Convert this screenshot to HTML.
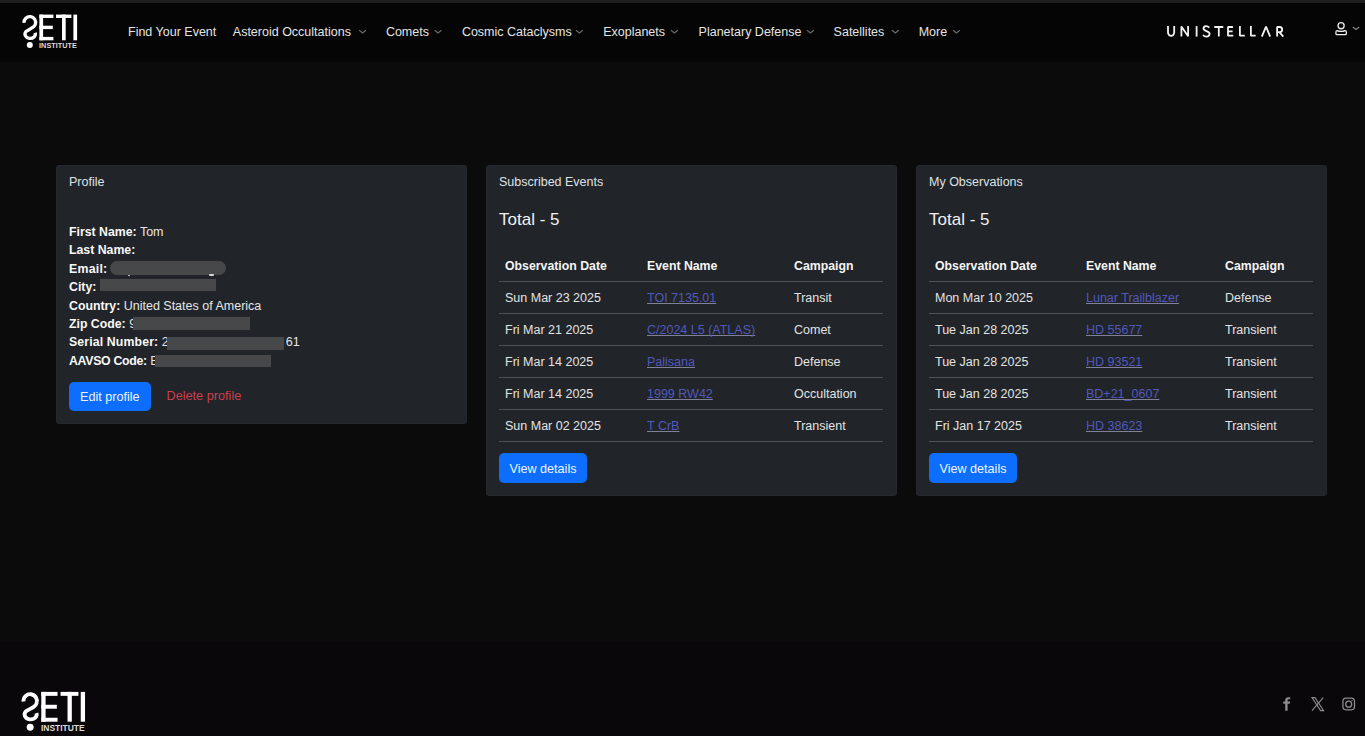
<!DOCTYPE html>
<html><head><meta charset="utf-8">
<style>
*{margin:0;padding:0;box-sizing:border-box}
html,body{width:1365px;height:736px;overflow:hidden;background:#0b0b0b;font-family:"Liberation Sans",sans-serif;color:#dee2e6}
.abs{position:absolute;white-space:nowrap}
#topstrip{position:absolute;left:0;top:0;width:1365px;height:3px;background:#1e1e1e}
#header{position:absolute;left:0;top:3px;width:1365px;height:59px;background:#050505}
#footer{position:absolute;left:0;top:642px;width:1365px;height:94px;background:#090709}
.nav{position:absolute;top:24px;font-size:12.5px;line-height:16px;color:#e4e4e4}
.chev{position:absolute;top:30px}
.card{position:absolute;top:165px;width:411px;background:#212529;border-radius:4px;box-shadow:inset 0 0 0 1px #25282c}
.ctitle{position:absolute;left:13px;top:9px;font-size:12.5px;line-height:16px;color:#dee2e6}
.total{position:absolute;left:13px;top:45px;font-size:17px;line-height:20px;color:#f0f0f0}
.tbl{position:absolute;left:13px;top:88px;width:384px}
.hdr{position:absolute;top:5px;font-size:12.3px;font-weight:bold;line-height:16px;color:#f5f5f5}
.row{position:absolute;left:0;width:384px;height:32px;border-top:1px solid #505356}
.cell{position:absolute;top:8px;font-size:12.5px;line-height:16px;color:#e3e3e3}
.lnk{color:#5258bb;text-decoration:underline;text-decoration-color:#7f8198;text-decoration-skip-ink:none;text-decoration-thickness:1px}
.btn{position:absolute;background:#0d6efd;border-radius:5px;color:#eef4ff;font-size:12.6px;line-height:16px}
.pf{position:absolute;left:13px;font-size:12.5px;line-height:16px;color:#e6e6e6}
.pf b{font-size:12.3px;color:#f8f8f8}
.red{position:absolute;background:#46484a}
</style></head><body>
<div id="topstrip"></div>
<div id="header"></div>
<div id="footer"></div>

<!-- header logo -->
<svg class="abs" style="left:0;top:0" width="100" height="60" viewBox="0 0 100 60">
  <g fill="none" stroke="#fff" stroke-width="3.3">
    <path d="M24.05,22.9 A5.8,5.8 0 1 1 35.3,24.3 C34.9,27.4 28.5,29.6 25.94,31.5 A5.2,4.35 0 1 0 35.22,32.87"/>
  </g>
  <circle cx="29.8" cy="45.1" r="3" fill="#fff"/>
  <g fill="#fff">
    <rect x="39.4" y="14.6" width="3.7" height="25.7"/>
    <rect x="39.4" y="14.6" width="14" height="3.4"/>
    <rect x="39.4" y="25.7" width="13.4" height="3.4"/>
    <rect x="39.4" y="36.9" width="14" height="3.4"/>
    <rect x="56" y="14.6" width="15.4" height="3.4"/>
    <rect x="62" y="14.6" width="3.7" height="25.7"/>
    <rect x="73.4" y="14.6" width="3.7" height="25.7"/>
  </g>
  <text x="39.1" y="48.2" font-family="Liberation Sans" font-weight="bold" font-size="8" fill="#dcdcdc" textLength="37.7" lengthAdjust="spacingAndGlyphs">INSTITUTE</text>
</svg>

<div class="nav" style="left:128px">Find Your Event</div>
<div class="nav" style="left:232.8px">Asteroid Occultations</div>
<div class="nav" style="left:385.9px">Comets</div>
<div class="nav" style="left:461.9px">Cosmic Cataclysms</div>
<div class="nav" style="left:603.2px">Exoplanets</div>
<div class="nav" style="left:698.6px">Planetary Defense</div>
<div class="nav" style="left:833.6px">Satellites</div>
<div class="nav" style="left:918.7px">More</div>
<svg class="abs" style="left:0;top:0" width="1365" height="62">
  <g fill="none" stroke="#6a6a6a" stroke-width="1.2">
    <path d="M359.2,30.2 L362.6,33 L366,30.2"/>
    <path d="M434.6,30.2 L438,33 L441.4,30.2"/>
    <path d="M576,30.2 L579.4,33 L582.8,30.2"/>
    <path d="M671,30.2 L674.4,33 L677.8,30.2"/>
    <path d="M807,30.2 L810.4,33 L813.8,30.2"/>
    <path d="M892,30.2 L895.4,33 L898.8,30.2"/>
    <path d="M953,30.2 L956.4,33 L959.8,30.2"/>
  </g>
  <!-- UNISTELLAR -->
  <g fill="none" stroke="#f2f2f2" stroke-width="1.8" stroke-linejoin="bevel">
    <path d="M1168,26.1 V32.5 A3.1,3.4 0 0 0 1174.2,32.5 V26.1"/>
    <path d="M1181.4,36.6 V26.4 L1188.1,36.3 V26.1"/>
    <path d="M1196.6,26.1 V36.6"/>
    <path d="M1209.3,27.6 C1208.2,26.4 1206.9,26.1 1206,26.1 C1204.3,26.1 1203.5,27.2 1203.5,28.6 C1203.5,31.6 1209.6,30.6 1209.6,33.8 C1209.6,35.5 1208.1,36.6 1206.3,36.6 C1205,36.6 1203.8,35.9 1203,35"/>
    <path d="M1214.3,27 H1223.3 M1218.8,27 V36.6"/>
    <path d="M1232.9,27 H1228 V35.7 H1233.3 M1228,31.3 H1232.6"/>
    <path d="M1239.9,26.1 V35.7 H1244.8"/>
    <path d="M1250.9,26.1 V35.7 H1255.7"/>
    <path d="M1261.8,36.6 L1266,26.6 L1270.2,36.6"/>
    <path d="M1277.1,36.6 V27 H1279.6 A2.6,2.6 0 0 1 1279.6,32.2 H1277.1 M1279.4,32.2 L1283.3,36.6"/>
  </g>
  <!-- user icon -->
  <g fill="none" stroke="#eeeeee" stroke-width="1.3">
    <circle cx="1341.1" cy="25.7" r="3.05"/>
    <path d="M1337.4,30.6 Q1341.1,32.2 1344.9,30.6 Q1346.4,30.6 1346.4,32.2 V33.4 Q1346.4,34.6 1345.2,34.6 H1337 Q1335.9,34.6 1335.9,33.4 V32.2 Q1335.9,30.6 1337.4,30.6 Z"/>
  </g>
  <path d="M1352.8,27.1 L1356,29.5 L1359.2,27.1" fill="none" stroke="#888" stroke-width="1.2"/>
</svg>

<!-- Profile card -->
<div class="card" style="left:56px;height:259px">
  <div class="ctitle">Profile</div>
  <div class="pf" style="top:59px"><b>First Name:</b> Tom</div>
  <div class="pf" style="top:77.4px"><b>Last Name:</b></div>
  <div class="pf" style="top:95.8px"><b style="letter-spacing:0.25px">Email:</b></div>
  <div class="pf" style="top:114.2px"><b>City:</b></div>
  <div class="pf" style="top:132.6px"><b>Country:</b> United States of America</div>
  <div class="pf" style="top:151px"><b>Zip Code:</b> 9</div>
  <div class="pf" style="top:169.4px"><b style="letter-spacing:0.13px">Serial Number:</b> 2<span style="display:inline-block;width:117px"></span>61</div>
  <div class="pf" style="top:187.8px"><b style="letter-spacing:-0.3px">AAVSO Code:</b> E</div>
  <div class="red" style="left:54px;top:96px;width:116px;height:14px;border-radius:7px"></div>
  <div class="red" style="left:153px;top:109.3px;width:5px;height:2px;border-radius:1px;background:#d8d8d8"></div>
  <div class="red" style="left:72px;top:109.8px;width:1.5px;height:1.5px;background:#bbb"></div>
  <div class="red" style="left:43.7px;top:114px;width:116.2px;height:12.3px"></div>
  <div class="red" style="left:77px;top:151.8px;width:117px;height:13.2px"></div>
  <div class="red" style="left:111px;top:171.5px;width:117px;height:13.3px"></div>
  <div class="red" style="left:98.7px;top:189.5px;width:116.2px;height:12.2px"></div>
  <div class="btn" style="left:13px;top:216.6px;width:82px;height:29.7px"><span class="abs" style="left:11px;top:7px">Edit profile</span></div>
  <div class="abs" style="left:110.5px;top:223px;font-size:12.7px;line-height:16px;color:#cd3e4e">Delete profile</div>
</div>

<!-- Subscribed Events card -->
<div class="card" style="left:486px;height:331px">
  <div class="ctitle">Subscribed Events</div>
  <div class="total">Total - 5</div>
  <div class="tbl">
    <div class="hdr" style="left:6px">Observation Date</div>
    <div class="hdr" style="left:148px">Event Name</div>
    <div class="hdr" style="left:295px">Campaign</div>
    <div class="row" style="top:28px"><span class="cell" style="left:6px">Sun Mar 23 2025</span><span class="cell lnk" style="left:148px">TOI 7135.01</span><span class="cell" style="left:295px">Transit</span></div>
    <div class="row" style="top:60px"><span class="cell" style="left:6px">Fri Mar 21 2025</span><span class="cell lnk" style="left:148px">C/2024 L5 (ATLAS)</span><span class="cell" style="left:295px">Comet</span></div>
    <div class="row" style="top:92px"><span class="cell" style="left:6px">Fri Mar 14 2025</span><span class="cell lnk" style="left:148px">Palisana</span><span class="cell" style="left:295px">Defense</span></div>
    <div class="row" style="top:124px"><span class="cell" style="left:6px">Fri Mar 14 2025</span><span class="cell lnk" style="left:148px">1999 RW42</span><span class="cell" style="left:295px">Occultation</span></div>
    <div class="row" style="top:156px"><span class="cell" style="left:6px">Sun Mar 02 2025</span><span class="cell lnk" style="left:148px">T CrB</span><span class="cell" style="left:295px">Transient</span></div>
    <div class="row" style="top:188px;height:1px"></div>
  </div>
  <div class="btn" style="left:13px;top:288px;width:88px;height:30px"><span class="abs" style="left:10.5px;top:8px">View details</span></div>
</div>

<!-- My Observations card -->
<div class="card" style="left:916px;height:331px">
  <div class="ctitle">My Observations</div>
  <div class="total">Total - 5</div>
  <div class="tbl">
    <div class="hdr" style="left:6px">Observation Date</div>
    <div class="hdr" style="left:157px">Event Name</div>
    <div class="hdr" style="left:296px">Campaign</div>
    <div class="row" style="top:28px"><span class="cell" style="left:6px">Mon Mar 10 2025</span><span class="cell lnk" style="left:157px">Lunar Trailblazer</span><span class="cell" style="left:296px">Defense</span></div>
    <div class="row" style="top:60px"><span class="cell" style="left:6px">Tue Jan 28 2025</span><span class="cell lnk" style="left:157px">HD 55677</span><span class="cell" style="left:296px">Transient</span></div>
    <div class="row" style="top:92px"><span class="cell" style="left:6px">Tue Jan 28 2025</span><span class="cell lnk" style="left:157px">HD 93521</span><span class="cell" style="left:296px">Transient</span></div>
    <div class="row" style="top:124px"><span class="cell" style="left:6px">Tue Jan 28 2025</span><span class="cell lnk" style="left:157px">BD+21_0607</span><span class="cell" style="left:296px">Transient</span></div>
    <div class="row" style="top:156px"><span class="cell" style="left:6px">Fri Jan 17 2025</span><span class="cell lnk" style="left:157px">HD 38623</span><span class="cell" style="left:296px">Transient</span></div>
    <div class="row" style="top:188px;height:1px"></div>
  </div>
  <div class="btn" style="left:13px;top:288px;width:88px;height:30px"><span class="abs" style="left:10.5px;top:8px">View details</span></div>
</div>

<!-- footer logo -->
<svg class="abs" style="left:0;top:670px" width="110" height="66" viewBox="0 0 110 66">
  <g transform="translate(-4.4,4.96) scale(1.16)">
  <g fill="none" stroke="#fff" stroke-width="3.3">
    <path d="M24.05,22.9 A5.8,5.8 0 1 1 35.3,24.3 C34.9,27.4 28.5,29.6 25.94,31.5 A5.2,4.35 0 1 0 35.22,32.87"/>
  </g>
  <circle cx="29.8" cy="45.1" r="3" fill="#fff"/>
  <g fill="#fff">
    <rect x="39.4" y="14.6" width="3.7" height="25.7"/>
    <rect x="39.4" y="14.6" width="14" height="3.4"/>
    <rect x="39.4" y="25.7" width="13.4" height="3.4"/>
    <rect x="39.4" y="36.9" width="14" height="3.4"/>
    <rect x="56" y="14.6" width="15.4" height="3.4"/>
    <rect x="62" y="14.6" width="3.7" height="25.7"/>
    <rect x="73.4" y="14.6" width="3.7" height="25.7"/>
  </g>
  <text x="39.1" y="48.2" font-family="Liberation Sans" font-weight="bold" font-size="8" fill="#dcdcdc" textLength="37.7" lengthAdjust="spacingAndGlyphs">INSTITUTE</text>
  </g>
</svg>

<!-- social icons -->
<svg class="abs" style="left:1270px;top:690px" width="95" height="30" viewBox="1270 690 95 30">
  <path d="M1287.6,710.8 V703.8 H1289.8 L1290.1,701.6 H1287.6 V700.3 C1287.6,699.6 1287.9,699.3 1288.8,699.3 H1290.2 V697.4 C1289.8,697.3 1289.1,697.3 1288.3,697.3 C1286.4,697.3 1285.2,698.4 1285.2,700.2 V701.6 H1283.2 V703.8 H1285.2 V710.8 Z" fill="#8c8c8c"/>
  <g fill="none" stroke="#8c8c8c" stroke-width="1.1">
    <path d="M1312,697.6 H1315 L1323.6,710.6 H1320.6 Z"/>
    <path d="M1323.2,697.6 L1312,710.6"/>
  </g>
  <g fill="none" stroke="#8c8c8c" stroke-width="1.3">
    <rect x="1342.9" y="698.2" width="11.6" height="11.6" rx="3.2"/>
    <circle cx="1348.7" cy="704.2" r="3"/>
  </g>
  <circle cx="1352" cy="700.6" r="0.7" fill="#8c8c8c"/>
</svg>
</body></html>
